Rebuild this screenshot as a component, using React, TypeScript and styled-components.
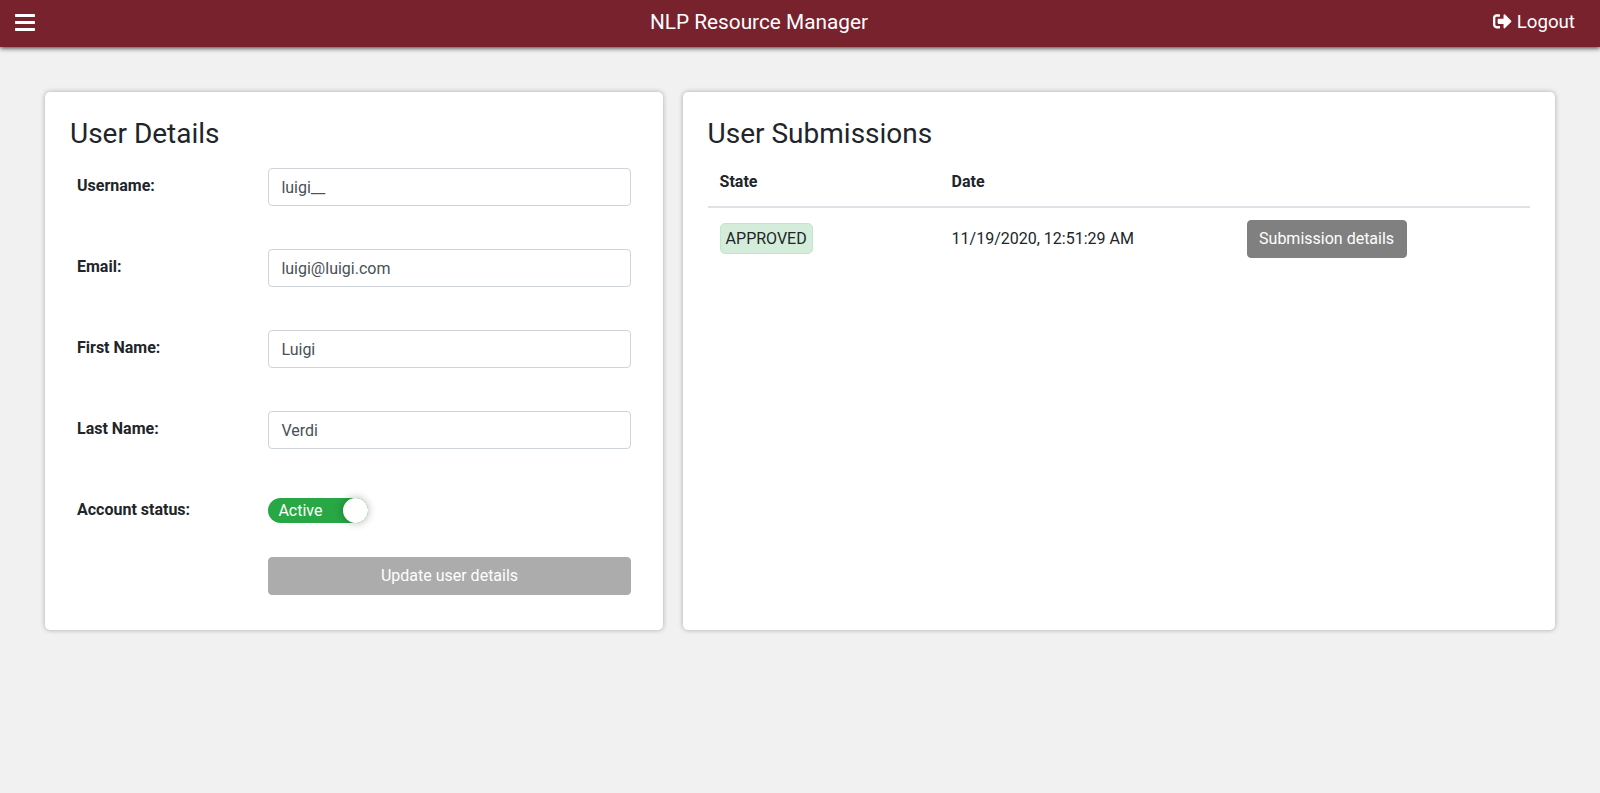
import React from "react";
import styled, { createGlobalStyle } from "styled-components";
import { FaSignOutAlt } from "react-icons/fa";

const GlobalStyle = createGlobalStyle`
  *, *::before, *::after { box-sizing: border-box; }
  body {
    margin: 0;
    background: #f1f1f1;
    color: #212529;
    font: 400 16px/1.5 Roboto, "Liberation Sans", sans-serif;
  }
  button, input { font: inherit; margin: 0; }
`;

const Header = styled.header`
  display: flex;
  justify-content: space-between;
  align-items: center;
  height: 47px;
  padding: 0 25px 4px 15px;
  background: #78222e;
  color: #fff;
  box-shadow: 0 1px 5px rgba(0, 0, 0, 0.8);
`;

const MenuButton = styled.button`
  display: flex;
  width: 20px;
  padding: 2px 0 0;
  border: 0;
  background: none;
  color: inherit;
`;

const AppTitle = styled.span`
  font-size: 20.8px;
  padding-right: 10px;
  line-height: 30px;
`;

const Logout = styled.a`
  display: flex;
  align-items: center;
  gap: 5px;
  font-size: 18.72px;
  line-height: 28px;
`;

const Main = styled.main`
  display: grid;
  grid-template-columns: 617.6px 872.4px;
  gap: 20px;
  padding: 45px;
`;

const Card = styled.section`
  height: 538px;
  padding: 25px;
  border-radius: 5px;
  background: #fff;
  box-shadow: 0 0 5px rgba(0, 0, 0, 0.3);
`;

const CardTitle = styled.h3`
  margin: 0 0 7.4px;
  font-size: 28px;
  font-weight: 400;
  line-height: 1.2;
`;

const Form = styled.form`
  padding: 10px 7px 0;
`;

const Row = styled.div<{ $height?: number }>`
  display: grid;
  grid-template-columns: 191px 363px;
  align-items: start;
  height: ${({ $height = 81 }) => $height}px;
`;

const Label = styled.label`
  padding-top: 6px;
  font-weight: 700;
`;

const Input = styled.input`
  width: 100%;
  height: 38px;
  padding: 7px 12px 5px 12.4px;
  border: 1px solid #ced4da;
  border-radius: 4px;
  background: #fff;
  color: #495057;
`;

const Switch = styled.div`
  display: flex;
  align-items: center;
  justify-content: space-between;
  width: 100px;
  height: 25px;
  margin-top: 6px;
  padding-left: 10.4px;
  border-radius: 13px;
  background: #28a745;
  color: #fff;
  line-height: 25px;
`;

const SwitchText = styled.span`
  padding-top: 1px;
  line-height: 24px;
`;

const Knob = styled.span`
  width: 25px;
  height: 25px;
  border-radius: 50%;
  background: #fff;
  box-shadow: 0 0 8px rgba(0, 0, 0, 0.3);
`;

const Button = styled.button<{ $wide?: boolean }>`
  display: block;
  width: ${({ $wide }) => ($wide ? "100%" : "160px")};
  height: 38px;
  padding: 6px 0;
  border: 1px solid gray;
  border-radius: 4px;
  background: gray;
  color: #fff;
  white-space: nowrap;
  &:disabled { opacity: 0.65; }
`;

const Table = styled.table`
  width: 822.4px;
  table-layout: fixed;
  border-collapse: separate;
  border-spacing: 0;
`;

const Th = styled.th<{ $width: number }>`
  width: ${({ $width }) => $width}px;
  height: 50px;
  padding: 12px;
  border-bottom: 2px solid #dee2e6;
  text-align: left;
`;

const Td = styled.td`
  height: 62px;
  padding: 12px;
  vertical-align: middle;
`;

const Badge = styled.span`
  display: block;
  width: fit-content;
  height: 31px;
  padding: 5px;
  border: 1px solid #c3e6cb;
  border-radius: 5px;
  background: #d4edda;
  line-height: 19px;
`;

const fields = [
  { id: "username", label: "Username:", value: "luigi__" },
  { id: "email", label: "Email:", value: "luigi@luigi.com" },
  { id: "first", label: "First Name:", value: "Luigi" },
  { id: "last", label: "Last Name:", value: "Verdi" },
];

export default function App() {
  return (
    <>
      <GlobalStyle />
      <Header>
        <MenuButton aria-label="Menu">
          <svg width="20" height="17" viewBox="0 0 20 17" fill="currentColor">
            <rect width="20" height="3" rx="0.7" />
            <rect y="7" width="20" height="3" rx="0.7" />
            <rect y="14" width="20" height="3" rx="0.7" />
          </svg>
        </MenuButton>
        <AppTitle>NLP Resource Manager</AppTitle>
        <Logout>
          <FaSignOutAlt size={18.72} />
          Logout
        </Logout>
      </Header>
      <Main>
        <Card>
          <CardTitle>User Details</CardTitle>
          <Form>
            {fields.map((f) => (
              <Row key={f.id}>
                <Label htmlFor={f.id}>{f.label}</Label>
                <Input id={f.id} defaultValue={f.value} />
              </Row>
            ))}
            <Row $height={65}>
              <Label>Account status:</Label>
              <Switch role="switch" aria-checked="true">
                <SwitchText>Active</SwitchText>
                <Knob />
              </Switch>
            </Row>
            <Row>
              <span />
              <Button type="button" $wide disabled>
                Update user details
              </Button>
            </Row>
          </Form>
        </Card>
        <Card>
          <CardTitle>User Submissions</CardTitle>
          <Table>
            <thead>
              <tr>
                <Th $width={232}>State</Th>
                <Th $width={295}>Date</Th>
                <Th $width={295.4} />
              </tr>
            </thead>
            <tbody>
              <tr>
                <Td>
                  <Badge>APPROVED</Badge>
                </Td>
                <Td>11/19/2020, 12:51:29 AM</Td>
                <Td>
                  <Button type="button">Submission details</Button>
                </Td>
              </tr>
            </tbody>
          </Table>
        </Card>
      </Main>
    </>
  );
}
